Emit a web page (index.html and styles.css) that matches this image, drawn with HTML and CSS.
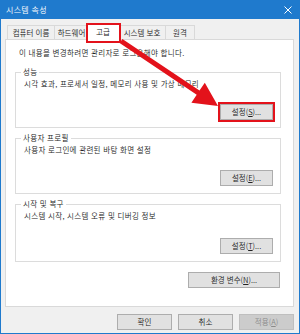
FILE: index.html
```html
<!DOCTYPE html>
<html lang="ko">
<head>
<meta charset="utf-8">
<link rel="stylesheet" href="styles.css">
</head>
<body>
<div class="window">
  <div class="titlebar">
    <span class="title">시스템 속성</span>
    <svg class="close" width="8" height="8" viewBox="0 0 8 8"><path d="M0.5 0.5L7.5 7.5M7.5 0.5L0.5 7.5" stroke="#fff" stroke-width="1"/></svg>
  </div>
  <div class="body">
    <div class="tabs">
      <div class="tab t1">컴퓨터 이름</div>
      <div class="tab t2">하드웨어</div>
      <div class="tab t3 active">고급</div>
      <div class="tab t4">시스템 보호</div>
      <div class="tab t5">원격</div>
    </div>
    <div class="panel">
      <div class="note">이 내용을 변경하려면 관리자로 로그온해야 합니다.</div>
      <div class="group g1">
        <div class="legend">성능</div>
        <div class="desc">시각 효과, 프로세서 일정, 메모리 사용 및 가상 메모리</div>
        <div class="btn marked">설정(<u>S</u>)...</div>
      </div>
      <div class="group g2">
        <div class="legend">사용자 프로필</div>
        <div class="desc">사용자 로그인에 관련된 바탕 화면 설정</div>
        <div class="btn">설정(<u>E</u>)...</div>
      </div>
      <div class="group g3">
        <div class="legend">시작 및 복구</div>
        <div class="desc">시스템 시작, 시스템 오류 및 디버깅 정보</div>
        <div class="btn">설정(<u>T</u>)...</div>
      </div>
      <div class="env-row"><div class="btn env">환경 변수(<u>N</u>)...</div></div>
    </div>
    <div class="footer">
      <div class="btn fbtn">확인</div>
      <div class="btn fbtn">취소</div>
      <div class="btn fbtn disabled">적용(<u>A</u>)</div>
    </div>
  </div>
  <svg class="arrow" width="300" height="334" viewBox="0 0 300 334">
    <polygon points="122.4,38.9 199.5,90.6 204.8,82.7 218,106 191.4,102.7 196.7,94.8 119.6,43.1" fill="#e3121b"/>
  </svg>
</div>
</body>
</html>
```
FILE: styles.css
```css
* { box-sizing: border-box; }
html, body { margin: 0; padding: 0; }
body {
  width: 300px;
  height: 334px;
  font-family: "Noto Sans CJK KR", "Noto Sans", sans-serif;
  font-size: 7.5px;
  font-weight: 350;
  letter-spacing: 0.3px;
  color: #222;
  background: #ffffff;
  overflow: hidden;
}
.window {
  position: relative;
  width: 300px;
  height: 334px;
  border: 1px solid #1f7acd;
  background: #f0f0f0;
  display: flex;
  flex-direction: column;
}
.titlebar {
  height: 18px;
  background: #1f7acd;
  color: #fff;
  display: flex;
  align-items: center;
  justify-content: space-between;
  padding: 0 7px 0 5px;
  flex: none;
}
.title { font-size: 8px; line-height: 10px; }
.close { display: block; }
.body {
  flex: 1;
  display: flex;
  flex-direction: column;
  padding: 3px 5px 0 4px;
}
.tabs {
  display: flex;
  align-items: flex-end;
  padding-left: 2px;
  height: 17px;
  position: relative;
  z-index: 2;
}
.tab {
  height: 14px;
  border: 1px solid #d9d9d9;
  border-bottom: none;
  border-right: none;
  background: #f0f0f0;
  display: flex;
  align-items: center;
  justify-content: center;
  line-height: 10px;
  white-space: nowrap;
  letter-spacing: 0;
}
.t1 { width: 47px; }
.t2 { width: 34px; }
.t3 { width: 33px; }
.t4 { width: 47px; }
.t5 { width: 30px; border-right: 1px solid #d9d9d9; }
.tab.active {
  position: relative;
  height: 17px;
  margin: 0 -2px -1px -2px;
  width: 34px;
  background: #fff;
  border-right: 1px solid #d9d9d9;
  z-index: 3;
}
.tab.active + .tab { border-left: none; padding-left: 1px; }
.tab.active::after {
  content: "";
  position: absolute;
  left: -1px;
  right: -2px;
  top: -1px;
  bottom: -3px;
  border: 2px solid #e3121b;
}
.panel {
  height: 268px;
  background: #fff;
  border: 1px solid #d9d9d9;
  padding: 8px 0 0 9px;
  display: flex;
  flex-direction: column;
  flex: none;
}
.note { line-height: 10px; margin-left: 4px; white-space: nowrap; }
.group {
  width: 266px;
  height: 56px;
  border: 1px solid #dcdcdc;
  display: flex;
  flex-direction: column;
  padding: 0 7px 7px 8px;
  flex: none;
}
.g1 { margin-top: 14px; }
.g2, .g3 { margin-top: 10px; }
.g3 { height: 58px; }
.legend {
  align-self: flex-start;
  margin-top: -6px;
  margin-left: -3px;
  padding: 0 2px;
  background: #fff;
  line-height: 10px;
  white-space: nowrap;
}
.desc { margin-top: 2px; line-height: 10px; white-space: nowrap; }
.btn {
  height: 16px;
  width: 53px;
  border: 1px solid #adadad;
  background: #e1e1e1;
  display: flex;
  align-items: center;
  justify-content: center;
  line-height: 10px;
  white-space: nowrap;
  letter-spacing: 0;
}
.btn u { text-decoration-thickness: 1px; text-underline-offset: 1px; }
.group .btn { align-self: flex-end; margin-top: auto; }
.btn.marked { position: relative; }
.btn.marked::after {
  content: "";
  position: absolute;
  left: -3px;
  right: -3px;
  top: -3px;
  bottom: -3px;
  border: 2px solid #e3121b;
}
.env-row {
  width: 266px;
  display: flex;
  justify-content: flex-end;
  margin-top: 10px;
  padding-right: 1px;
}
.btn.env { width: 92px; }
.footer {
  display: flex;
  justify-content: flex-end;
  gap: 6px;
  margin-top: 7px;
}
.fbtn { width: 55px; }
.fbtn.disabled {
  background: #cccccc;
  border-color: #bfbfbf;
  color: #8a8a8a;
}
.arrow {
  position: absolute;
  left: -1px;
  top: -1px;
  pointer-events: none;
  z-index: 5;
}
```
